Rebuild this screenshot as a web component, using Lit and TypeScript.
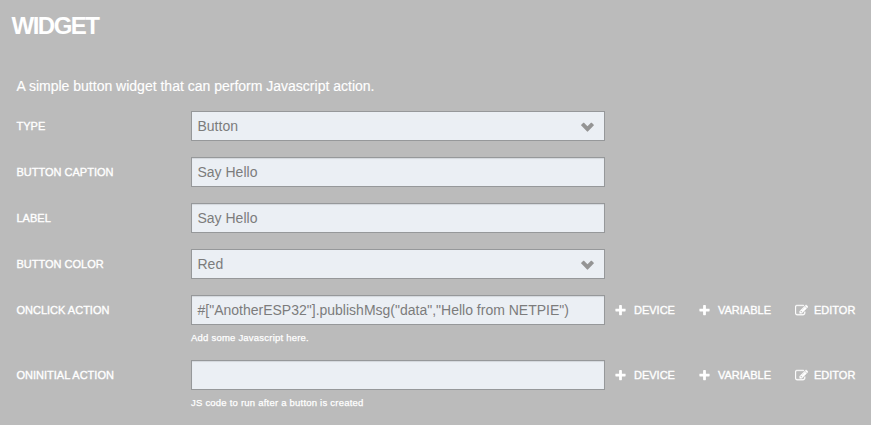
import { LitElement, html, css, svg, nothing } from "lit";
import { customElement } from "lit/decorators.js";

const PLUS =
  "M1600 736v192q0 40-28 68t-68 28h-416v416q0 40-28 68t-68 28h-192q-40 0-68-28t-28-68v-416h-416q-40 0-68-28t-28-68v-192q0-40 28-68t68-28h416v-416q0-40 28-68t68-28h192q40 0 68 28t28 68v416h416q40 0 68 28t28 68z";
const EDIT =
  "M888 1184l116-116-152-152-116 116v56h96v96h56zm440-720q-16-16-33 1l-350 350q-17 17-1 33t33-1l350-350q17-17 1-33zm80 594v190q0 119-84.5 203.5t-203.5 84.5h-832q-119 0-203.5-84.5t-84.5-203.5v-832q0-119 84.5-203.5t203.5-84.5h832q63 0 117 25 15 7 18 23 3 17-9 29l-49 49q-14 14-32 8-23-6-45-6h-832q-66 0-113 47t-47 113v832q0 66 47 113t113 47h832q66 0 113-47t47-113v-126q0-13 9-22l64-64q15-15 35-7t20 29zm-96-738l288 288-672 672h-288v-288zm444 132l-92 92-288-288 92-92q28-28 68-28t68 28l152 152q28 28 28 68t-28 68z";
const CHEVRON =
  "M1640 790l-700 700q-19 19-45 19t-45-19l-700-700q-19-19-19-45.5t19-45.5l240-240q19-19 45-19t45 19l415 400 415-400q19-19 45-19t45 19l240 240q19 19 19 45.5t-19 45.5z";

const icon = (path: string, cls: string) =>
  html`<svg class="icon ${cls}" viewBox="0 0 1792 1792">${svg`<path d=${path}></path>`}</svg>`;

interface Field {
  label: string;
  value: string;
  kind: "select" | "text" | "code";
  hint?: string;
}

const FIELDS: Field[] = [
  { label: "Type", value: "Button", kind: "select" },
  { label: "Button caption", value: "Say Hello", kind: "text" },
  { label: "Label", value: "Say Hello", kind: "text" },
  { label: "Button color", value: "Red", kind: "select" },
  {
    label: "onClick action",
    value: '#["AnotherESP32"].publishMsg("data","Hello from NETPIE")',
    kind: "code",
    hint: "Add some Javascript here.",
  },
  { label: "onInitial action", value: "", kind: "code", hint: "JS code to run after a button is created" },
];

@customElement("app-root")
export class AppRoot extends LitElement {
  static styles = css`
    :host {
      display: block;
      box-sizing: border-box;
      height: 425px;
      overflow: hidden;
      padding: 11px 0 0 11.5px;
      background: #bbb;
      color: #fff;
      font-family: "Liberation Sans", Arial, sans-serif;
    }
    .title {
      margin: 0;
      font-size: 24px;
      line-height: 30px;
      font-weight: 700;
      letter-spacing: -1.5px;
      text-transform: uppercase;
    }
    .form {
      padding: 35px 0 0 4.5px;
    }
    .description {
      margin: 0 0 15px;
      padding-left: 0.5px;
      font-size: 14px;
      line-height: 20px;
      white-space: nowrap;
      -webkit-text-stroke: 0.15px #fff;
    }
    .row {
      display: grid;
      grid-template-columns: 175px 414px auto;
      align-items: center;
      justify-content: start;
      margin-bottom: 16px;
    }
    .label,
    .action {
      font-size: 11px;
      line-height: 14px;
      text-transform: uppercase;
      white-space: nowrap;
      -webkit-text-stroke: 0.35px #fff;
    }
    .label {
      padding-left: 0.5px;
    }
    .field {
      box-sizing: border-box;
      height: 30px;
      display: flex;
      align-items: center;
      justify-content: space-between;
      padding: 0 9px 0 5.5px;
      border: 1px solid #96989a;
      background: #ebeff4;
      color: #7c7c7c;
      font-size: 14px;
      white-space: nowrap;
    }
    .inset {
      box-shadow: inset 0 1px 1px rgba(0, 0, 0, 0.1);
    }
    .hint {
      grid-column: 2;
      font-size: 9.5px;
      line-height: 12px;
      letter-spacing: 0.22px;
      padding: 7px 0 0;
      white-space: nowrap;
      -webkit-text-stroke: 0.25px #fff;
    }
    .actions {
      display: grid;
      grid-template-columns: 84px 96px auto;
      padding-left: 9px;
    }
    .action {
      display: flex;
      align-items: center;
    }
    .icon {
      display: block;
      flex: none;
      fill: currentColor;
    }
    .plus,
    .edit {
      width: 13px;
      height: 13px;
      margin-right: 7px;
    }
    .edit {
      margin: 0 6px 0 1px;
      stroke: currentColor;
      stroke-width: 50;
    }
    .chevron {
      width: 15px;
      height: 15px;
      fill: #949494;
    }
  `;

  private renderActions() {
    return html`<div class="actions">
      <span class="action">${icon(PLUS, "plus")}Device</span>
      <span class="action">${icon(PLUS, "plus")}Variable</span>
      <span class="action">${icon(EDIT, "edit")}Editor</span>
    </div>`;
  }

  private renderField(f: Field) {
    return html`<div class="row">
      <span class="label">${f.label}</span>
      <div class="field ${f.kind === "select" ? "" : "inset"}">
        <span>${f.value}</span>
        ${f.kind === "select" ? icon(CHEVRON, "chevron") : nothing}
      </div>
      ${f.kind === "code" ? this.renderActions() : nothing}
      ${f.hint ? html`<span class="hint">${f.hint}</span>` : nothing}
    </div>`;
  }

  render() {
    return html`
      <h2 class="title">Widget</h2>
      <div class="form">
        <p class="description">A simple button widget that can perform Javascript action.</p>
        ${FIELDS.map((f) => this.renderField(f))}
      </div>
    `;
  }
}
